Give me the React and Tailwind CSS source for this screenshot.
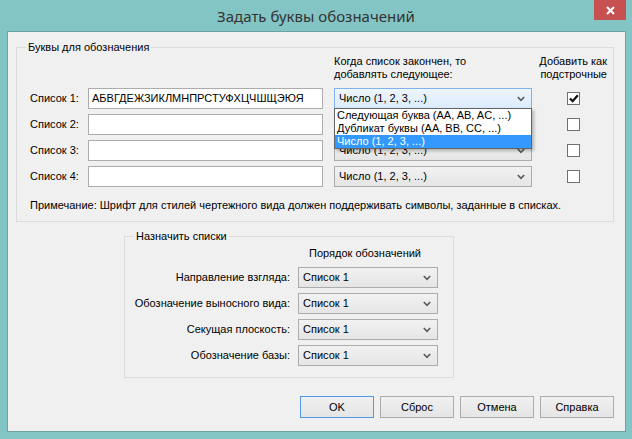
import React from "react";

const FONT = "font-['Liberation_Sans',Arial,sans-serif]";

function Chevron() {
  return (
    <svg width="8" height="6" viewBox="0 0 8 6" className="shrink-0">
      <polyline points="0.8,1 4,4.4 7.2,1" fill="none" stroke="#5a5a5a" strokeWidth="1.6" />
    </svg>
  );
}

function Combo({ value, width, active, children }) {
  return (
    <div className={`relative ${width} h-[21px]`}>
      <div
        className={`flex items-center justify-between h-full border pl-[4px] pr-[6px] ${
          active
            ? "border-[#7eb4ea] bg-linear-to-b from-[#eef5fd] to-[#dcecfc]"
            : "border-[#acacac] bg-linear-to-b from-[#f2f2f2] to-[#e5e5e5]"
        }`}
      >
        <span className="text-[11px] leading-[13px] text-black">{value}</span>
        <Chevron />
      </div>
      {children}
    </div>
  );
}

function TextBox({ value }) {
  return (
    <div className="w-[235px] h-[21px] border border-[#acacac] bg-white flex items-center pl-[3px] text-[11px] text-black">
      {value}
    </div>
  );
}

function CheckBox({ checked }) {
  return (
    <div className="w-[13px] h-[13px] border border-[#707070] bg-white flex items-center justify-center">
      {checked && (
        <svg width="10" height="9" viewBox="0 0 10 9">
          <path d="M1 4.4 L3.7 7.2 L8.8 1.2" fill="none" stroke="#111" strokeWidth="2.2" />
        </svg>
      )}
    </div>
  );
}

function Button({ label, primary }) {
  return (
    <div
      className={`w-[74px] h-[22px] flex items-center justify-center border text-[11px] text-black bg-linear-to-b from-[#f0f0f0] to-[#e5e5e5] ${
        primary ? "border-[#4f9ae4]" : "border-[#acacac]"
      }`}
    >
      {label}
    </div>
  );
}

const lists = [
  { label: "Список 1:", value: "АБВГДЕЖЗИКЛМНПРСТУФХЦЧШЩЭЮЯ", checked: true },
  { label: "Список 2:", value: "", checked: false },
  { label: "Список 3:", value: "", checked: false },
  { label: "Список 4:", value: "", checked: false },
];

const assign = [
  "Направление взгляда:",
  "Обозначение выносного вида:",
  "Секущая плоскость:",
  "Обозначение базы:",
];

function DropList() {
  const items = [
    "Следующая буква (AA, AB, AC, ...)",
    "Дубликат буквы (AA, BB, CC, ...)",
    "Число (1, 2, 3, ...)",
  ];
  return (
    <div className="absolute left-0 top-[20px] w-[198px] h-[41px] bg-white border border-[#646464] shadow-[2px_2px_3px_rgba(0,0,0,0.25)] z-10">
      {items.map((t, i) => (
        <div
          key={i}
          className={`h-[13px] leading-[13px] pl-[2px] text-[11px] ${
            i === 2 ? "bg-[#3399ff] text-white" : "text-black"
          }`}
        >
          {t}
        </div>
      ))}
    </div>
  );
}

export default function App() {
  return (
    <div className={`w-[632px] h-[439px] bg-[#83c5c4] ${FONT} text-[11px] text-black overflow-hidden`}>
      {/* title bar */}
      <div className="relative h-[31px] flex items-center justify-center">
        <span className="text-[15px] text-[#333] font-['Noto_Sans',sans-serif] pt-[1px]">Задать буквы обозначений</span>
        <div className="absolute right-[6px] top-0 w-[32px] h-[20px] bg-[#c75050] flex items-center justify-center">
          <svg width="9" height="9" viewBox="0 0 9 9">
            <path d="M1 1 L8 8 M8 1 L1 8" stroke="#fff" strokeWidth="2" />
          </svg>
        </div>
      </div>

      {/* client */}
      <div className="ml-[7px] w-[619px] h-[401px] bg-[#f0f0f0] border border-[#6aa3a2] flex flex-col">
        <fieldset className="ml-[8px] mt-[8px] w-[598px] h-[182px] border border-[#dcdcdc] p-0">
          <legend className="ml-[9px] px-[2px] leading-[14px]">Буквы для обозначения</legend>

          <div className="flex h-[34px]">
            <div className="w-[317px] shrink-0" />
            <div className="w-[186px] shrink-0 leading-[13px] pt-[1px] whitespace-nowrap">
              Когда список закончен, то
              <br />
              добавлять следующее:
            </div>
            <div className="w-[87px] shrink-0 leading-[13px] pt-[1px] text-right whitespace-nowrap">
              Добавить как
              <br />
              подстрочные
            </div>
          </div>

          <div className="flex flex-col gap-[5px]">
            {lists.map((r, i) => (
              <div key={i} className="flex items-center h-[21px]">
                <div className="w-[71px] pl-[13px]">{r.label}</div>
                <TextBox value={r.value} />
                <div className="w-[11px]" />
                <Combo value="Число (1, 2, 3, ...)" width="w-[198px]" active={i === 0}>
                  {i === 0 && <DropList />}
                </Combo>
                <div className="w-[35px]" />
                <CheckBox checked={r.checked} />
              </div>
            ))}
          </div>

          <div className="mt-[11px] pl-[13px] leading-[14px]">
            Примечание: Шрифт для стилей чертежного вида должен поддерживать символы, заданные в списках.
          </div>
        </fieldset>

        <fieldset className="ml-[116px] mt-[7px] w-[330px] h-[149px] border border-[#dcdcdc] p-0">
          <legend className="ml-[9px] px-[2px] leading-[14px]">Назначить списки</legend>
          <div className="pt-[3px] pl-[184px] leading-[14px]">Порядок обозначений</div>
          <div className="mt-[7px] flex flex-col gap-[5px]">
            {assign.map((label, i) => (
              <div key={i} className="flex items-center h-[21px]">
                <div className="w-[165px] text-right">{label}</div>
                <div className="w-[8px]" />
                <Combo value="Список 1" width="w-[140px]" />
              </div>
            ))}
          </div>
        </fieldset>

        <div className="mt-[18px] mr-[11px] flex justify-end gap-[6px]">
          <Button label="OK" primary />
          <Button label="Сброс" />
          <Button label="Отмена" />
          <Button label="Справка" />
        </div>
      </div>
    </div>
  );
}
